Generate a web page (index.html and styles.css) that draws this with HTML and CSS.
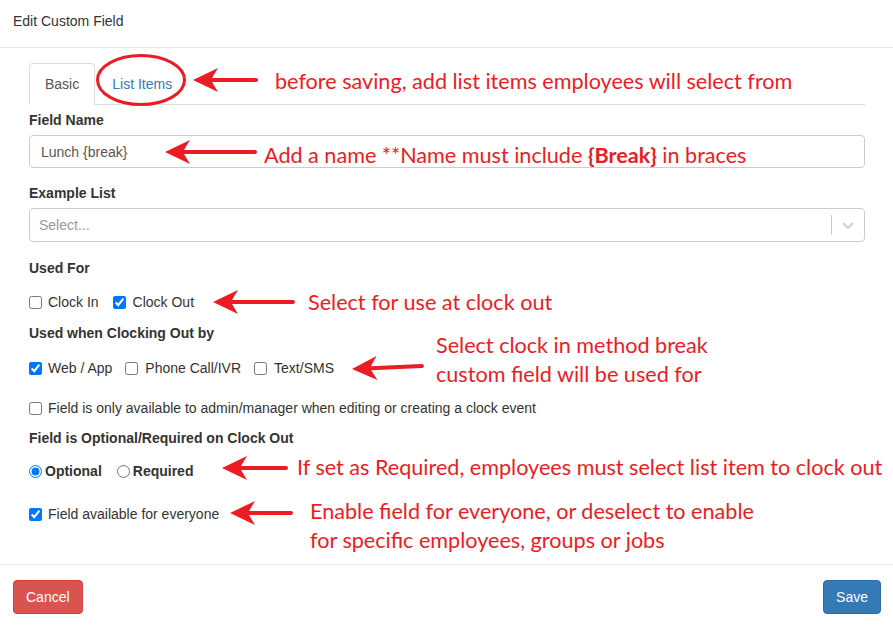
FILE: index.html
```html
<!doctype html>
<html lang="en">
	<head>
		<meta charset="utf-8" />
		<meta name="viewport" content="width=device-width,initial-scale=1" />
		<title>Edit Custom Field</title>
		<link rel="stylesheet" href="styles.css">
	</head>
	<body>
		<div class="modal">
			<div class="modal-header">Edit Custom Field</div>

			<div class="modal-body">
				<ul class="nav-tabs">
					<li class="active"><a>Basic</a></li>
					<li><a href="#list-items">List Items</a></li>
				</ul>

				<form class="tab-pane">
					<div class="form-group">
						<label class="control-label" for="field-name">Field Name</label>
						<input type="text" id="field-name" class="form-control" value="Lunch {break}" />
					</div>

					<div class="form-group">
						<label class="control-label">Example List</label>
						<div class="select">
							<span class="select-placeholder">Select...</span>
							<span class="select-sep"></span>
							<span class="select-arrow">
								<svg width="12" height="7" viewBox="0 0 12 7"><path d="M1 1l5 5 5-5" fill="none" stroke="#ccc" stroke-width="1.8"/></svg>
							</span>
						</div>
					</div>

					<div class="group-label used-for">Used For</div>
					<div class="check-row row-used-for">
						<label><input type="checkbox" />Clock In</label>
						<label><input type="checkbox" checked />Clock Out</label>
					</div>

					<div class="group-label used-by">Used when Clocking Out by</div>
					<div class="check-row row-used-by">
						<label><input type="checkbox" checked />Web / App</label>
						<label><input type="checkbox" />Phone Call/IVR</label>
						<label><input type="checkbox" />Text/SMS</label>
					</div>

					<div class="check-row row-admin">
						<label><input type="checkbox" />Field is only available to admin/manager when editing or creating a clock event</label>
					</div>

					<div class="group-label required-on">Field is Optional/Required on Clock Out</div>
					<div class="check-row radio-row">
						<label><input type="radio" name="required" checked />Optional</label>
						<label><input type="radio" name="required" />Required</label>
					</div>

					<div class="check-row row-everyone">
						<label><input type="checkbox" checked />Field available for everyone</label>
					</div>
				</form>
			</div>

			<div class="modal-footer">
				<button type="button" class="btn btn-danger">Cancel</button>
				<button type="button" class="btn btn-primary">Save</button>
			</div>

			<!-- help notes drawn over the form -->
			<svg class="ring" width="92" height="54" viewBox="0 0 92 54"><ellipse cx="46" cy="27" rx="43.5" ry="24.5" fill="none" stroke="#ec1c24" stroke-width="3"/></svg>

			<svg class="arrow arrow-tabs" width="65" height="26" viewBox="0 0 65 26"><path d="M0 13L25 1 19 11H63a2 2 0 0 1 0 4H19L25 25z"/></svg>
			<svg class="arrow arrow-name" width="92" height="26" viewBox="0 0 92 26"><path d="M0 13L25 1 19 11H90a2 2 0 0 1 0 4H19L25 25z"/></svg>
			<svg class="arrow arrow-used-for" width="82" height="26" viewBox="0 0 82 26"><path d="M0 13L25 1 19 11H80a2 2 0 0 1 0 4H19L25 25z"/></svg>
			<svg class="arrow arrow-used-by" width="72" height="26" viewBox="0 0 72 26"><path d="M0 13L25 1 19 11H70a2 2 0 0 1 0 4H19L25 25z"/></svg>
			<svg class="arrow arrow-required" width="66" height="26" viewBox="0 0 66 26"><path d="M0 13L25 1 19 11H64a2 2 0 0 1 0 4H19L25 25z"/></svg>
			<svg class="arrow arrow-everyone" width="63" height="26" viewBox="0 0 63 26"><path d="M0 13L25 1 19 11H61a2 2 0 0 1 0 4H19L25 25z"/></svg>

			<p class="note note-tabs">before saving, add list items employees will select from</p>
			<p class="note note-name">Add a name **Name must include <b>{Break}</b> in braces</p>
			<p class="note note-used-for">Select for use at clock out</p>
			<p class="note note-used-by">Select clock in method break<br />custom field will be used for</p>
			<p class="note note-required">If set as Required, employees must select list item to clock out</p>
			<p class="note note-everyone">Enable field for everyone, or deselect to enable<br />for specific employees, groups or jobs</p>
		</div>
	</body>
</html>
```

FILE: styles.css
```css
body {
	margin: 0;
	background: #fff;
	color: #333;
	font-family: "Liberation Sans", Arial, sans-serif;
	font-size: 14px;
}

.modal {
	position: relative;
	width: 893px;
	height: 628px;
	overflow: hidden;
}

.modal-header {
	box-sizing: border-box;
	height: 48px;
	padding: 13px;
	border-bottom: 1px solid #e5e5e5;
	line-height: 16px;
}

.modal-body {
	box-sizing: border-box;
	height: 516px;
	padding: 15px 28px 0 29px;
}

/* tabs */
.nav-tabs {
	display: flex;
	margin: 0;
	padding: 0;
	list-style: none;
	border-bottom: 1px solid #ddd;

	& a {
		display: block;
		margin: 0 2px -1px 0;
		padding: 10px 15px;
		border: 1px solid transparent;
		border-radius: 4px 4px 0 0;
		color: #337ab7;
		line-height: 20px;
		text-decoration: none;
	}

	& li:not(.active) a {
		padding-left: 14px;
	}

	& .active a {
		border-color: #ddd #ddd transparent;
		background: #fff;
		color: #555;
	}
}

/* form */
.tab-pane {
	padding-top: 6px;
}

.form-group {
	margin-bottom: 16px;
}

.control-label,
.group-label {
	display: block;
	font-weight: 700;
	line-height: 18px;
}

.control-label {
	margin-bottom: 6px;
}

.form-control {
	box-sizing: border-box;
	display: block;
	width: 100%;
	height: 33px;
	margin: 0;
	padding: 0 11px;
	border: 1px solid #ccc;
	border-radius: 4px;
	color: #555;
	font: inherit;
}

.select {
	box-sizing: border-box;
	display: flex;
	align-items: center;
	height: 34px;
	border: 1px solid #ccc;
	border-radius: 4px;
}

.select-placeholder {
	flex: 1;
	padding-left: 9px;
	color: #999;
}

.select-sep {
	width: 1px;
	height: 20px;
	background: #ccc;
}

.select-arrow {
	display: flex;
	justify-content: center;
	width: 32px;
}

.used-for {
	margin-top: 17px;
}

.check-row {
	display: flex;
	align-items: center;
	gap: 13px;
	height: 18px;

	& label {
		display: flex;
		align-items: center;
		gap: 6px;
	}

	& input {
		width: 13px;
		height: 13px;
		margin: 0;
	}
}

.row-used-for {
	margin-top: 16px;
	gap: 14px;

	& label + label {
		gap: 7px;
	}
}

.used-by {
	margin-top: 13px;
}

.row-used-by {
	margin-top: 17px;

	& label + label {
		gap: 7px;
	}
}

.row-admin {
	margin-top: 22px;
}

.required-on {
	margin-top: 12px;
}

.radio-row {
	margin-top: 15px;
	gap: 15px;
	font-weight: 700;

	& label {
		gap: 3px;
	}
}

.row-everyone {
	margin-top: 25px;
}

.modal-footer {
	display: flex;
	justify-content: space-between;
	padding: 15px 12px 15px 13px;
	border-top: 1px solid #e5e5e5;
}

.btn {
	padding: 6px 12px;
	border: 1px solid transparent;
	border-radius: 4px;
	color: #fff;
	font: inherit;
	line-height: 20px;
}

.btn-danger {
	border-color: #d43f3a;
	background: #d9534f;
}

.btn-primary {
	border-color: #2e6da4;
	background: #337ab7;
}

/* help notes */
.ring,
.arrow,
.note {
	position: absolute;
}

.ring {
	left: 95px;
	top: 53px;
}

.arrow {
	fill: #ec1c24;
}

.arrow-tabs { left: 193px; top: 67px; }
.arrow-name { left: 165px; top: 139px; }
.arrow-used-for { left: 213px; top: 289px; }
.arrow-used-by {
	left: 352px;
	top: 356px;
	transform: rotate(-2.4deg);
	transform-origin: 0 13px;
}
.arrow-required { left: 222px; top: 455px; }
.arrow-everyone { left: 230px; top: 500px; }

.note {
	margin: 0;
	color: #ec1c24;
	font-family: Lato, "Noto Sans", sans-serif;
	font-size: 21.6px;
	line-height: 29px;
	white-space: nowrap;
}

.note-tabs { left: 275px; top: 67px; }
.note-name { left: 264px; top: 141px; }
.note-used-for { left: 308px; top: 288px; }
.note-used-by { left: 436px; top: 331px; }
.note-required { left: 297px; top: 453px; }
.note-everyone { left: 310px; top: 497px; }
```
